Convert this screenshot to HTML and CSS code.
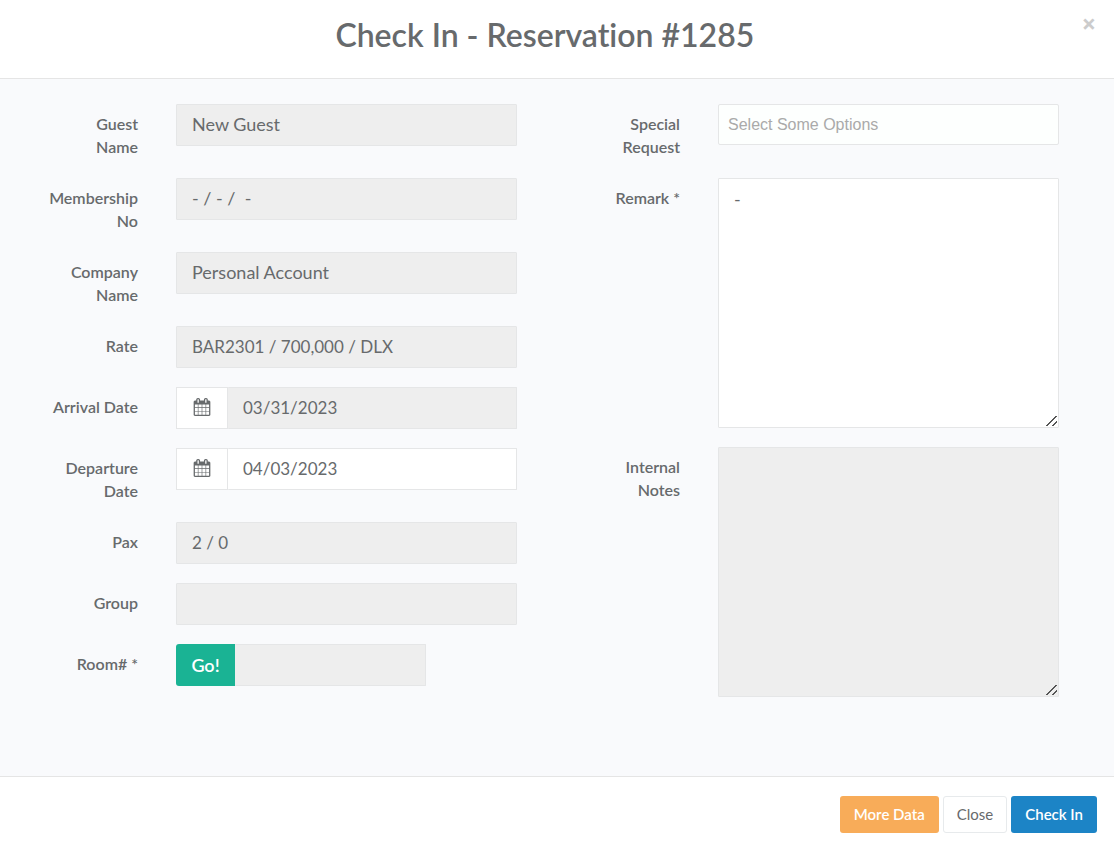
FILE: index.html
```html
<!DOCTYPE html>
<html lang="en">
<head>
<meta charset="utf-8">
<meta name="viewport" content="width=device-width, initial-scale=1">
<title>Check In - Reservation #1285</title>
<link rel="stylesheet" href="styles.css">
</head>
<body>
<svg class="sprite" aria-hidden="true">
  <symbol id="calendar" viewBox="0 0 1792 1792"><path d="M192 1664h288v-288h-288v288zm352 0h320v-288h-320v288zm-352-352h288v-320h-288v320zm352 0h320v-320h-320v320zm-352-384h288v-288h-288v288zm736 736h320v-288h-320v288zm-384-736h320v-288h-320v288zm768 736h288v-288h-288v288zm-384-352h320v-320h-320v320zm-352-864v-288q0-13-9.500-22.500t-22.500-9.500h-64q-13 0-22.500 9.500t-9.500 22.500v288q0 13 9.500 22.500t22.500 9.500h64q13 0 22.500-9.500t9.500-22.500zm736 864h288v-320h-288v320zm-384-384h320v-288h-320v288zm384 0h288v-288h-288v288zm32-480v-288q0-13-9.500-22.500t-22.500-9.500h-64q-13 0-22.500 9.500t-9.500 22.500v288q0 13 9.500 22.500t22.500 9.500h64q13 0 22.500-9.500t9.500-22.500zm384-64v1280q0 52-38 90t-90 38h-1408q-52 0-90-38t-38-90v-1280q0-52 38-90t90-38h128v-96q0-66 47-113t113-47h64q66 0 113 47t47 113v96h384v-96q0-66 47-113t113-47h64q66 0 113 47t47 113v96h128q52 0 90 38t38 90z"/></symbol>
</svg>
<form class="modal">
  <header class="modal-header">
    <h1 class="modal-title">Check In - Reservation #1285</h1>
    <button class="dismiss" type="button" aria-label="Dismiss">×</button>
  </header>
  <main class="modal-body">
    <div class="column">
      <div class="row">
        <label class="label" for="guest">Guest<br>Name</label>
        <input class="field" id="guest" type="text" value="New Guest" readonly>
      </div>
      <div class="row">
        <label class="label" for="member">Membership No</label>
        <input class="field" id="member" type="text" value="- / - /  -" readonly>
      </div>
      <div class="row">
        <label class="label" for="company">Company Name</label>
        <input class="field" id="company" type="text" value="Personal Account" readonly>
      </div>
      <div class="row">
        <label class="label" for="rate">Rate</label>
        <input class="field numeric" id="rate" type="text" value="BAR2301 / 700,000 / DLX" readonly>
      </div>
      <div class="row">
        <label class="label" for="arrival">Arrival Date</label>
        <div class="group">
          <span class="addon"><svg class="icon" aria-hidden="true"><use href="#calendar"/></svg></span>
          <input class="field numeric" id="arrival" type="text" value="03/31/2023" readonly>
        </div>
      </div>
      <div class="row">
        <label class="label" for="departure">Departure Date</label>
        <div class="group">
          <span class="addon"><svg class="icon" aria-hidden="true"><use href="#calendar"/></svg></span>
          <input class="field numeric" id="departure" type="text" value="04/03/2023">
        </div>
      </div>
      <div class="row">
        <label class="label" for="pax">Pax</label>
        <input class="field numeric" id="pax" type="text" value="2 / 0" readonly>
      </div>
      <div class="row">
        <label class="label" for="groupname">Group</label>
        <input class="field" id="groupname" type="text" readonly>
      </div>
      <div class="row">
        <label class="label" for="room">Room# *</label>
        <div class="group group-room">
          <button class="go" type="button">Go!</button>
          <input class="field" id="room" type="text" readonly>
        </div>
      </div>
    </div>
    <div class="column">
      <div class="row">
        <label class="label" for="special">Special Request</label>
        <input class="field chooser" id="special" type="text" placeholder="Select Some Options">
      </div>
      <div class="row">
        <label class="label" for="remark">Remark *</label>
        <textarea class="field area" id="remark">-</textarea>
      </div>
      <div class="row">
        <label class="label" for="notes">Internal Notes</label>
        <textarea class="field area" id="notes" readonly></textarea>
      </div>
    </div>
  </main>
  <footer class="modal-footer">
    <button class="btn btn-warning" type="button">More Data</button>
    <button class="btn btn-plain" type="button">Close</button>
    <button class="btn btn-primary" type="submit">Check In</button>
  </footer>
</form>
</body>
</html>
```
FILE: styles.css
```css
*, *::before, *::after { box-sizing: border-box; }

body {
  margin: 0;
  background: #fff;
  color: #676a6c;
  font-family: Lato, "Open Sans", sans-serif;
  font-size: 16px;
  font-variant-ligatures: none;
}

button, input, textarea { font: inherit; color: inherit; margin: 0; }

.sprite { display: none; }

.modal { display: flex; flex-direction: column; min-height: 100vh; }

.modal-header {
  display: flex;
  align-items: flex-start;
  padding: 13px 18px 21px 8px;
  border-bottom: 1px solid #e5e5e5;
}
.modal-title {
  flex: 1;
  margin: 0;
  font-size: 32px;
  line-height: 44px;
  font-weight: 600;
  text-align: center;
}
.dismiss {
  padding: 0;
  border: 0;
  background: none;
  color: #ccc;
  font-family: "Open Sans", sans-serif;
  font-size: 25px;
  font-weight: 700;
  line-height: 21px;
}

.modal-body {
  flex: 1;
  display: grid;
  grid-template-columns: 1fr 1fr;
  padding: 25px 15px 79px;
  background: #f9fafc;
}
.column {
  display: flex;
  flex-direction: column;
  gap: 19px;
  padding: 0 40px 0 34px;
}
.row {
  display: grid;
  grid-template-columns: 89px 1fr;
  column-gap: 38px;
  align-items: start;
}
.label {
  padding: 8px 0 1px;
  font-weight: 600;
  line-height: 23px;
  text-align: right;
}

.field {
  display: block;
  width: 100%;
  min-width: 0;
  height: 42px;
  padding: 6px 15px 8px;
  border: 1px solid #e5e6e7;
  border-radius: 1px;
  background: #fff;
  font-size: 18px;
  line-height: 26px;
  outline: 0;
}
.field:read-only { background: #eee; }
.numeric { font-size: 17px; }

.group { display: flex; }
.group .field { flex: 1; border-left: 0; }
.group-room { width: 250px; }
.addon {
  display: flex;
  flex: none;
  align-items: center;
  justify-content: center;
  width: 52px;
  padding-bottom: 2px;
  border: 1px solid #e5e6e7;
  background: #fff;
}
.icon { width: 18px; height: 18px; fill: currentColor; }
.go {
  width: 59px;
  padding: 0;
  border: 0;
  border-radius: 3px 0 0 3px;
  background: #1ab394;
  color: #fff;
  font-size: 18px;
  font-weight: 600;
}

.row > .chooser {
  height: 41px;
  padding: 6px 9px;
  border-radius: 2px;
  background: #fdfffe;
  font-family: "Liberation Sans", Arial, sans-serif;
  font-size: 16px;
}
.chooser::placeholder { color: #aaa; opacity: 1; }

.area { height: 250px; padding: 7px 15px; resize: both; }
.area::-webkit-resizer {
  background:
    linear-gradient(135deg, transparent 46%, #555 46%, #555 57%, transparent 57%, transparent 72%, #555 72%, #555 83%, transparent 83%)
    3px 4px / 11px 10px no-repeat;
}

.modal-footer {
  display: flex;
  justify-content: flex-end;
  gap: 4px;
  padding: 19px 17px 14px;
  border-top: 1px solid #e5e5e5;
}
.btn {
  height: 37px;
  padding: 0 13px 2px;
  border: 1px solid transparent;
  border-radius: 3px;
  font-size: 15px;
  font-weight: 600;
}
.btn-warning { background: #f8ac59; color: #fff; }
.btn-plain { background: #fff; border-color: #e7eaec; font-weight: 400; }
.btn-primary { background: #1c84c6; color: #fff; }
```
